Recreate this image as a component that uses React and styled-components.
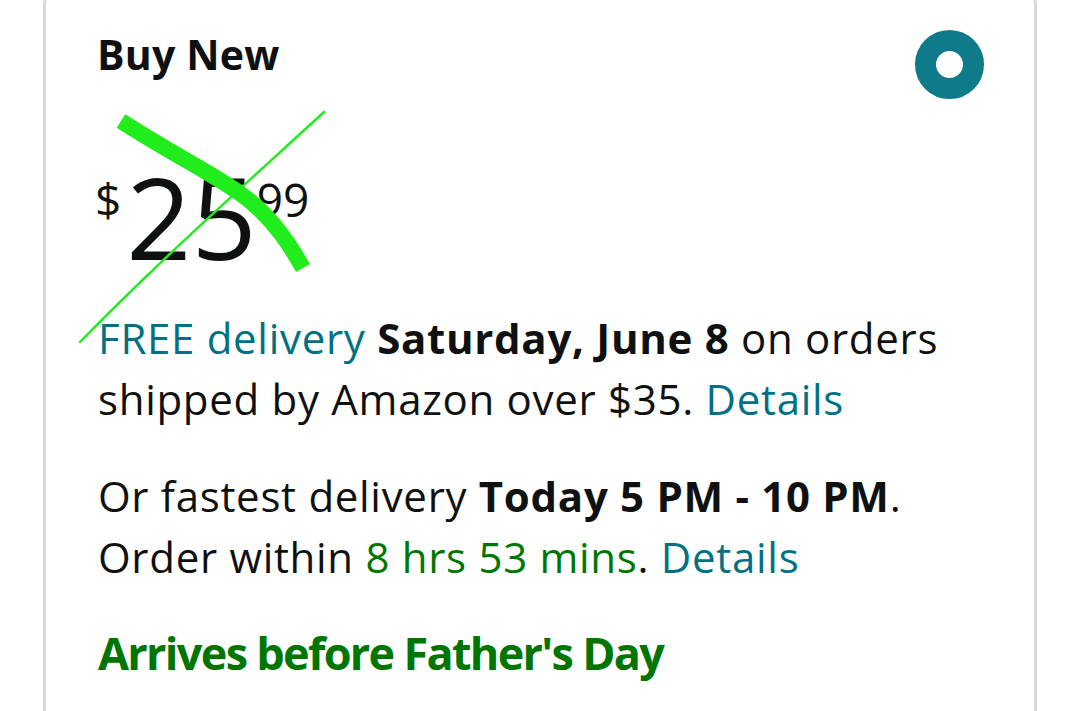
import React from 'react';
import styled, { createGlobalStyle } from 'styled-components';

const GlobalStyle = createGlobalStyle`
  html, body {
    margin: 0;
    padding: 0;
    background: #ffffff;
    overflow: hidden;
  }
  body {
    font-family: "Open Sans", "Noto Sans", Arial, sans-serif;
    color: #0f1111;
  }
`

const Page = styled.div`
  width: 1080px;
  height: 711px;
  overflow: hidden;
`

const Card = styled.div`
  position: relative;
  box-sizing: border-box;
  width: 994px;
  min-height: 780px;
  margin: -10px 0 0 43px;
  border: 3px solid #d5d9d9;
  border-radius: 14px;
  padding: 37px 50px 40px 52px;
`

const Header = styled.div`
  display: flex;
  justify-content: space-between;
  align-items: flex-start;
`

const Title = styled.h2`
  margin: 0 0 0 -1px;
  font-size: 41px;
  font-weight: 700;
  line-height: 48px;
  letter-spacing: 0.2px;
`

const Radio = styled.span`
  box-sizing: border-box;
  display: block;
  width: 69px;
  height: 69px;
  border-radius: 50%;
  border: 21px solid #0f7b8a;
  background: #ffffff;
`

const Price = styled.div`
  display: flex;
  align-items: flex-start;
  margin: 60px 0 0 -3px;
  line-height: 1;
`

const Symbol = styled.span`
  font-size: ${p => p.$size}px;
  margin-top: ${p => p.$top || 0}px;
  margin-right: ${p => p.$gap || 0}px;
`

const Para = styled.p`
  margin: ${p => p.$top}px 0 0;
  font-size: 42px;
  line-height: 61px;
  letter-spacing: 0.7px;
`

const Link = styled.span`
  color: #007185;
`

const Strong = styled.b`
  font-weight: 700;
`

const Green = styled.span`
  color: #007600;
`

const Badge = styled.p`
  margin: 35px 0 0;
  font-size: 45px;
  font-weight: 700;
  line-height: 61px;
  color: #007600;
  letter-spacing: -1.7px;
`

const Scribble = styled.svg`
  position: absolute;
  left: -46px;
  top: 7px;
  width: 1080px;
  height: 711px;
  pointer-events: none;
`

export default function App() {
  return (
    <Page>
      <GlobalStyle />
      <Card>
        <Header>
          <Title>Buy New</Title>
          <Radio />
        </Header>
        <Price>
          <Symbol $size={46} $top={17} $gap={5}>$</Symbol>
          <Symbol $size={114}>25</Symbol>
          <Symbol $size={46} $top={17}>99</Symbol>
        </Price>
        <Para $top={34}>
          <Link>FREE delivery</Link> <Strong>Saturday, June 8</Strong> on orders shipped by Amazon over $35. <Link>Details</Link>
        </Para>
        <Para $top={36}>
          Or fastest delivery <Strong>Today 5 PM - 10 PM</Strong>. Order within <Green>8 hrs 53 mins</Green>. <Link>Details</Link>
        </Para>
        <Badge>Arrives before Father's Day</Badge>
        <Scribble viewBox="0 0 1080 711">
          <path
            d="M121 121 C 175 156, 222 178, 250 201 C 275 222, 290 245, 303 268"
            fill="none"
            stroke="#21ec1c"
            strokeWidth="16"
            strokeLinecap="butt"
          />
          <path
            d="M324 112 C 250 180, 160 260, 80 342"
            fill="none"
            stroke="#21ec1c"
            strokeWidth="2.5"
            strokeLinecap="round"
          />
        </Scribble>
      </Card>
    </Page>
  );
}
